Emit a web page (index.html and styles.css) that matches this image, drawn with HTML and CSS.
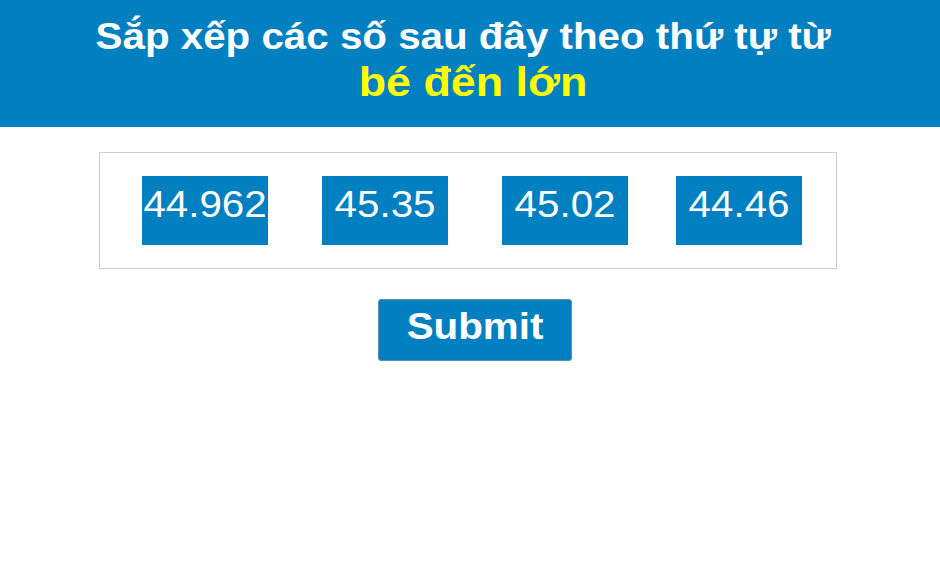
FILE: index.html
```html
<!DOCTYPE html>
<html>
<head>
<meta charset="utf-8">
<link rel="stylesheet" href="styles.css">
</head>
<body>
<div class="header">
  <div class="line1"><span class="wide">Sắp xếp các số sau đây theo thứ tự từ</span></div>
  <div class="line2"><span class="wide hl">bé đến lớn</span></div>
</div>
<div class="board">
  <div class="num"><span class="wide">44.962</span></div>
  <div class="num"><span class="wide">45.35</span></div>
  <div class="num"><span class="wide">45.02</span></div>
  <div class="num"><span class="wide">44.46</span></div>
</div>
<div class="actions">
  <button class="submit"><span class="wide">Submit</span></button>
</div>
</body>
</html>
```
FILE: styles.css
```css
html, body {
  margin: 0;
  padding: 0;
  background: #fff;
  font-family: "Liberation Sans", Arial, sans-serif;
}
.wide {
  display: inline-block;
  transform: scaleX(1.12);
  transform-origin: 50% 50%;
}
.header {
  background: #0080c0;
  height: 127px;
  box-sizing: border-box;
  padding: 15px 0 0 7px;
  text-align: center;
  color: #fff;
  font-weight: bold;
}
.line1 {
  font-size: 36px;
  line-height: 44px;
}
.line1 .wide {
  margin-right: 20px;
}
.line2 {
  font-size: 40px;
  line-height: 46px;
}
.hl {
  color: #ffff00;
}
.board {
  margin: 25px 0 0 99px;
  width: 694px;
  height: 115px;
  border: 1px solid #cccccc;
  display: flex;
  align-items: center;
  gap: 54px;
  padding-left: 42px;
}
.num {
  width: 126px;
  height: 69px;
  background: #0080c0;
  color: #fff;
  font-size: 36px;
  display: flex;
  justify-content: center;
  padding-top: 8px;
  box-sizing: border-box;
  line-height: 42px;
}
.num:last-child {
  margin-left: -6px;
}
.actions {
  display: flex;
  justify-content: center;
  margin-top: 30px;
  padding-left: 9px;
}
.submit {
  width: 194px;
  height: 62px;
  background: #0080c0;
  color: #fff;
  font-family: "Liberation Sans", Arial, sans-serif;
  font-weight: bold;
  font-size: 36px;
  border: 1px solid #5c8fb5;
  border-radius: 3px;
  padding: 0 0 6px 0;
}
```
